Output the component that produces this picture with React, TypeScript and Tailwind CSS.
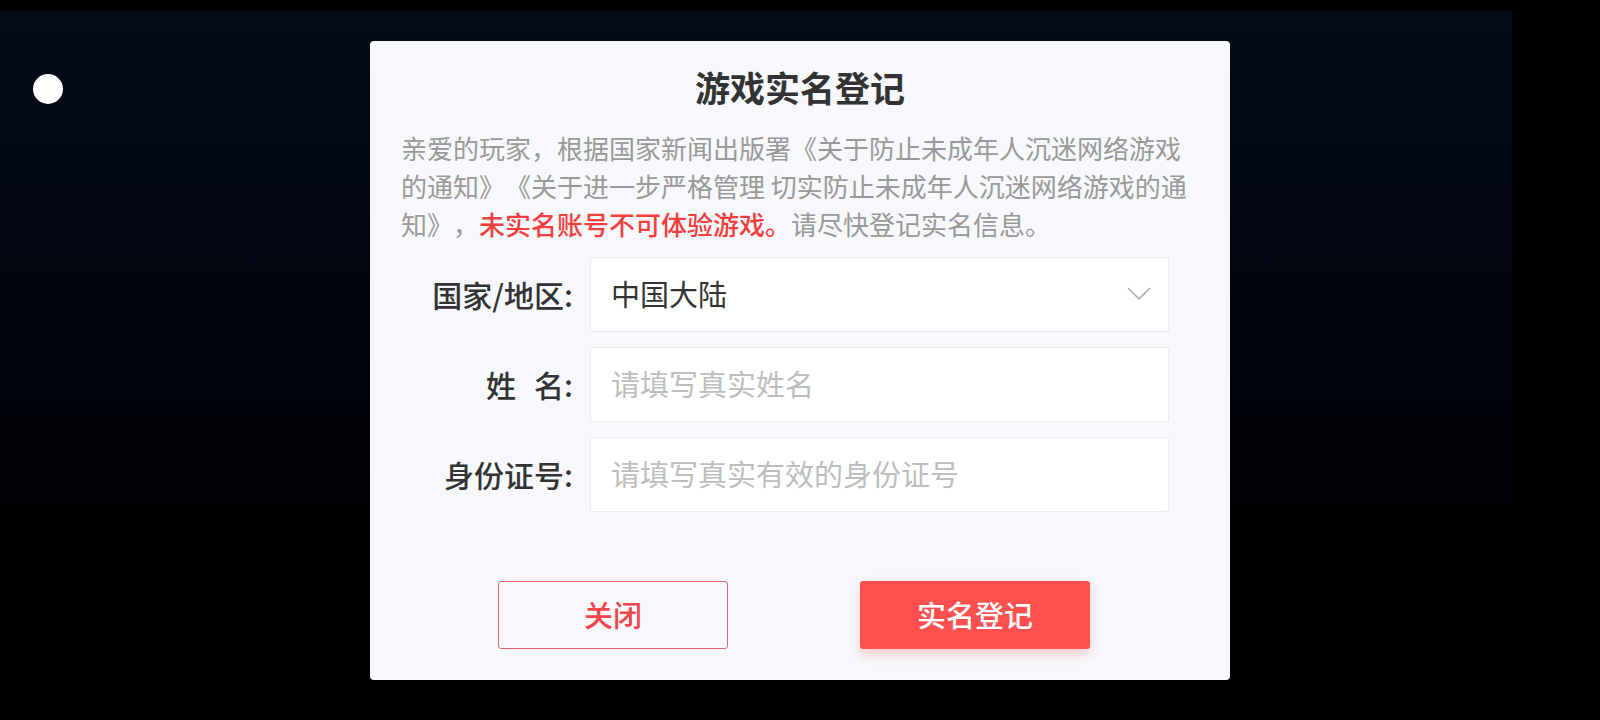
const FONT = "font-['Noto_Sans_CJK_SC','Noto_Sans',sans-serif]";

function Chevron() {
  return (
    <svg width="24" height="14" viewBox="0 0 24 14" fill="none">
      <polyline points="1.5,1.5 12,12 22.5,1.5" stroke="#aeaeae" strokeWidth="1.7" strokeLinecap="round" strokeLinejoin="round" />
    </svg>
  );
}

function Row({ label, children }: { label: React.ReactNode; children: React.ReactNode }) {
  return (
    <div className="flex items-center gap-[17px]">
      <div className="w-[172px] text-right text-[30px] font-medium text-[#333]">{label}</div>
      <div className="flex h-[75px] w-[579px] items-center rounded-[2px] border border-[#e9ebee] bg-white pl-[20px] pr-[17px]">
        {children}
      </div>
    </div>
  );
}

export default function App() {
  return (
    <div
      className={`relative flex h-[720px] w-[1600px] items-center justify-center bg-black bg-[linear-gradient(90deg,transparent_1512px,#000_1512px),linear-gradient(180deg,#000_0px,#000_9px,#050b19_13px,#030816_160px,#01040c_380px,#000_560px)] ${FONT}`}
    >
      {/* floating dot */}
      <div className="absolute left-[33px] top-[74px] h-[30px] w-[30px] rounded-full bg-white" />

      <div className="flex h-[639px] w-[860px] flex-col rounded-[4px] bg-[#f6f8fb] pt-[22px] pb-[31px]">
        <h1 className="text-center text-[35px] font-bold leading-[48px] text-[#333]">游戏实名登记</h1>

        <p className="mt-[18px] px-[31px] text-[26px] leading-[38px] whitespace-nowrap text-[#999] [text-spacing-trim:space-all]">
          亲爱的玩家，根据国家新闻出版署《关于防止未成年人沉迷网络游戏
          <br />
          的通知》《关于进一步严格管理 切实防止未成年人沉迷网络游戏的通
          <br />
          知》，<span className="font-medium text-[#f43e3e]">未实名账号不可体验游戏。</span>请尽快登记实名信息。
        </p>

        <div className="mt-[14px] flex flex-col gap-[15px] pl-[31px]">
          <Row label="国家/地区:">
            <span className="flex-1 text-[29px] text-[#333]">中国大陆</span>
            <Chevron />
          </Row>
          <Row
            label={
              <>
                姓<span className="inline-block w-[18px]" />名:
              </>
            }
          >
            <input
              className="w-full bg-transparent text-[29px] text-[#333] outline-none placeholder:text-[#bdbdbd]"
              placeholder="请填写真实姓名"
            />
          </Row>
          <Row label="身份证号:">
            <input
              className="w-full bg-transparent text-[29px] text-[#333] outline-none placeholder:text-[#bdbdbd]"
              placeholder="请填写真实有效的身份证号"
            />
          </Row>
        </div>

        <div className="mt-[69px] flex gap-[132px] pl-[128px]">
          <button className="h-[68px] w-[230px] rounded-[3px] border border-[#e6636a] text-[29px] font-medium text-[#f2444a]">
            关闭
          </button>
          <button className="h-[68px] w-[230px] rounded-[3px] bg-[#ff4f4f] text-[29px] font-medium text-white shadow-[0_5px_12px_rgba(255,79,79,0.28)]">
            实名登记
          </button>
        </div>
      </div>
    </div>
  );
}
